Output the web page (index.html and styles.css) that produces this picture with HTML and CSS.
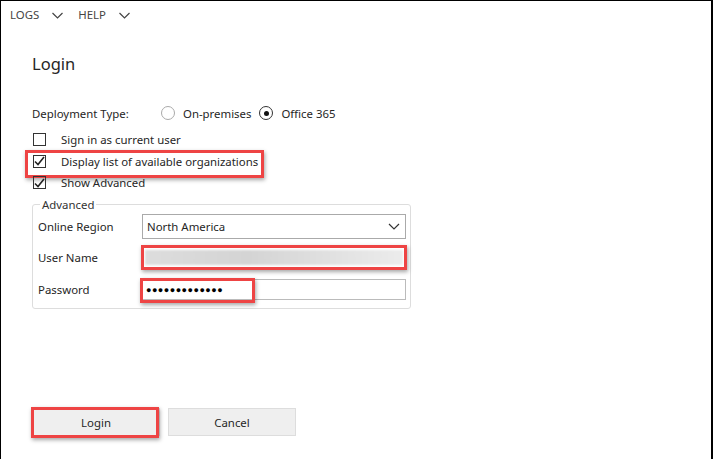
FILE: index.html
```html
<!DOCTYPE html>
<html>
<head>
<meta charset="utf-8">
<link rel="stylesheet" href="styles.css">
</head>
<body>
<div class="frame">
  <nav class="menu">
    <span class="menu-item">LOGS <svg class="chev" width="11" height="7" viewBox="0 0 11 7"><path d="M0.5 1l5 5 5-5" fill="none" stroke="#444" stroke-width="1.2"/></svg></span>
    <span class="menu-item">HELP <svg class="chev" width="11" height="7" viewBox="0 0 11 7"><path d="M0.5 1l5 5 5-5" fill="none" stroke="#444" stroke-width="1.2"/></svg></span>
  </nav>
  <main class="content">
    <h1 class="title">Login</h1>
    <div class="deploy">
      <span class="deploy-label">Deployment Type:</span>
      <span class="radio"></span><span class="radio-text">On-premises</span>
      <span class="radio checked"></span><span class="radio-text">Office 365</span>
    </div>
    <div class="check-row first"><span class="box"></span><span>Sign in as current user</span></div>
    <div class="check-row"><span class="box checked"><svg width="11" height="10" viewBox="0 0 11 10"><path d="M1 5.5l3 3L10 1" fill="none" stroke="#222" stroke-width="1.6"/></svg></span><span>Display list of available organizations</span><span class="hl hl-org"></span></div>
    <div class="check-row"><span class="box checked"><svg width="11" height="10" viewBox="0 0 11 10"><path d="M1 5.5l3 3L10 1" fill="none" stroke="#222" stroke-width="1.6"/></svg></span><span>Show Advanced</span></div>
    <fieldset class="adv">
      <legend>Advanced</legend>
      <div class="field first-field">
        <span class="flabel">Online Region</span>
        <div class="select">North America<svg width="12" height="7" viewBox="0 0 12 7"><path d="M1 1l5 5 5-5" fill="none" stroke="#333" stroke-width="1.2"/></svg></div>
      </div>
      <div class="field">
        <span class="flabel">User Name</span>
        <div class="input user"><span class="blur"></span><span class="hl hl-user"></span></div>
      </div>
      <div class="field">
        <span class="flabel">Password</span>
        <div class="input pass"><span class="dots">●●●●●●●●●●●●●</span><span class="hl hl-pass"></span></div>
      </div>
    </fieldset>
    <div class="buttons">
      <button class="btn login">Login<span class="hl hl-login"></span></button>
      <button class="btn">Cancel</button>
    </div>
  </main>
</div>
</body>
</html>
```

FILE: styles.css
```css
html, body { margin: 0; padding: 0; background: #fff; }
body { font-family: "Noto Sans", "Open Sans", sans-serif; font-size: 11.4px; color: #262626; }
.frame {
  width: 713px; height: 459px; box-sizing: border-box;
  border-top: 1px solid #000; border-left: 1px solid #000; border-right: 2px solid #000;
  overflow: hidden;
}
.menu { display: flex; gap: 15px; padding: 1px 0 0 9px; height: 24px; color: #444; }
.menu-item { display: flex; align-items: center; gap: 13px; font-size: 11.4px; }
.chev { margin-top: 3px; }
.content { padding-left: 31px; }
.title { font-size: 16.5px; font-weight: 400; margin: 0; line-height: 24px; padding-top: 26px; box-sizing: border-box; height: 65px; color: #262626; }
.deploy { display: flex; align-items: center; height: 18px; margin-top: 13px; }
.deploy-label { width: 130px; }
.radio { width: 14px; height: 14px; border: 1px solid #aaa; border-radius: 50%; box-sizing: border-box; margin-right: 8px; margin-left: -1px; position: relative; }
.radio.checked { border-color: #333; }
.radio.checked::after { content: ""; position: absolute; left: 3.5px; top: 3.5px; width: 5px; height: 5px; border-radius: 50%; background: #111; }
.radio-text { margin-right: 9px; }
.check-row { display: flex; align-items: center; height: 21.5px; position: relative; }
.check-row.first { margin-top: 7px; }
.box { width: 13px; height: 13px; border: 1px solid #333; box-sizing: border-box; margin: 0 15px 0 1px; display: flex; align-items: center; justify-content: center; }
.box svg { flex: none; }
.hl { position: absolute; border: 3px solid #ee4444; box-shadow: 1px 2px 4px rgba(0,0,0,0.35); box-sizing: border-box; pointer-events: none; }
.hl-org { left: -7px; top: -1px; width: 239px; height: 28px; }
.adv { width: 378px; box-sizing: border-box; border: 1px solid #ddd; border-radius: 3px; margin: 3px 0 0 0; padding: 0 4px 3px 5px; }
.adv legend { padding: 0 2px; margin-left: 2px; color: #333; }
.field { display: flex; align-items: center; height: 31.5px; }
.first-field { margin-top: -1px; }
.flabel { width: 104px; }
.select { width: 264px; height: 25px; box-sizing: border-box; border: 1px solid #aaa; display: flex; align-items: center; justify-content: space-between; padding: 0 5px 0 4px; }
.input { width: 264px; height: 21px; box-sizing: border-box; border: 1px solid #bbb; position: relative; display: flex; align-items: center; }
.blur { position: absolute; left: 2px; right: 2px; top: 2px; bottom: 2px; background: linear-gradient(90deg, #ddd, #d4d4d4 40%, #e4e4e4 80%, #ececec); filter: blur(1px); }
.hl-user { left: -2px; top: -3px; width: 266px; height: 25px; }
.dots { font-size: 9px; letter-spacing: 0.5px; padding-left: 3px; color: #000; }
.hl-pass { left: -3px; top: -2px; width: 115px; height: 25px; }
.buttons { display: flex; gap: 8px; margin-top: 99px; margin-left: 0; }
.btn { position: relative; width: 128px; height: 28px; background: #efefef; border: 1px solid #ddd; font: inherit; color: #262626; padding: 0; }
.hl-login { left: -2px; top: -2px; width: 128px; height: 31px; }
```
